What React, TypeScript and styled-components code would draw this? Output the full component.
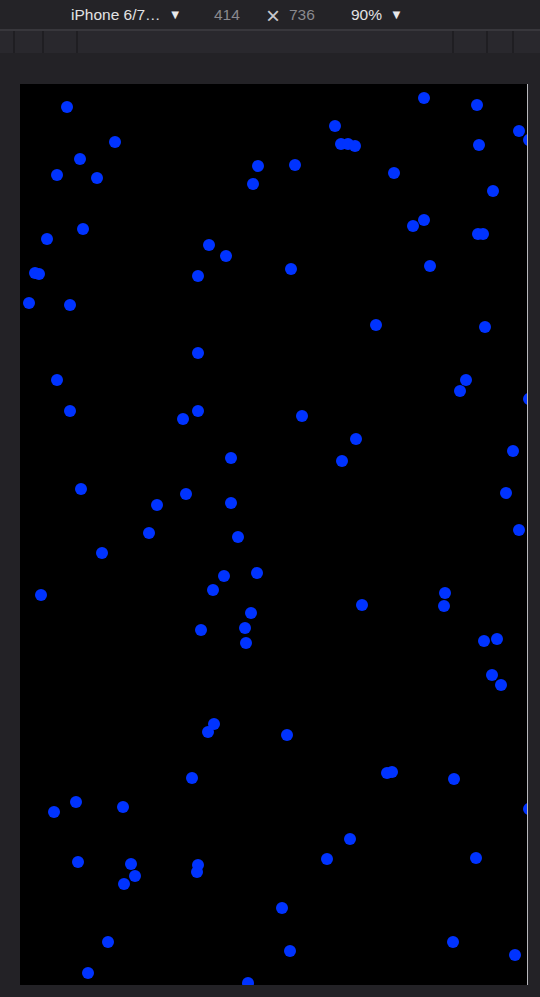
import styled, { createGlobalStyle } from "styled-components";

const GlobalStyle = createGlobalStyle`
  html, body {
    margin: 0;
    padding: 0;
    background: #242327;
    font-family: "Liberation Sans", Arial, sans-serif;
    overflow: hidden;
  }
`;

type Dot = [number, number];

// dot centres in canvas coordinates (page minus canvas origin 20,84)
const DOTS: Dot[] = [
  [67, 107], [115, 142], [80, 159], [57, 175], [97, 178], [258, 166], [253, 184],
  [83, 229], [47, 239], [209, 245], [226, 256], [198, 276], [35, 273], [39, 274],
  [29, 303], [70, 305], [424, 98], [477, 105], [335, 126], [341, 144], [348, 144],
  [355, 146], [519, 131], [529, 140], [479, 145], [295, 165], [394, 173], [493, 191],
  [424, 220], [413, 226], [478, 234], [483, 234], [291, 269], [430, 266],
  [198, 353], [57, 380], [70, 411], [198, 411], [183, 419], [231, 458], [81, 489],
  [186, 494], [157, 505], [231, 503], [376, 325], [485, 327], [466, 380], [460, 391],
  [529, 399], [302, 416], [356, 439], [342, 461], [513, 451], [506, 493], [519, 530],
  [149, 533], [238, 537], [102, 553], [41, 595], [224, 576], [257, 573], [213, 590],
  [251, 613], [201, 630], [245, 628], [246, 643], [214, 724], [208, 732],
  [445, 593], [444, 606], [362, 605], [484, 641], [497, 639], [492, 675], [501, 685],
  [287, 735], [192, 778], [76, 802], [54, 812], [123, 807], [78, 862], [131, 864],
  [135, 876], [124, 884], [198, 865], [197, 872], [108, 942], [88, 973], [248, 983],
  [387, 773], [392, 772], [454, 779], [529, 809], [350, 839], [327, 859], [476, 858],
  [282, 908], [290, 951], [453, 942], [515, 955],
].map(([x, y]) => [x - 20, y - 84] as Dot);

const Page = styled.div`
  width: 540px;
  height: 997px;
  display: flex;
  flex-direction: column;
  background: #242327;
`;

const Toolbar = styled.div`
  height: 29px;
  display: flex;
  align-items: center;
  padding-left: 71px;
  font-size: 15.5px;
  border-bottom: 2px solid #38373c;
`;

const Select = styled.span<{ $width: number }>`
  width: ${(p) => p.$width}px;
  color: #e2e2e4;
  display: flex;
  align-items: center;
  gap: 8px;
`;

const Caret = styled.span`
  font-size: 13px;
  color: #e8e8ea;
`;

const Dim = styled.span<{ $width: number }>`
  width: ${(p) => p.$width}px;
  color: #8a898e;
`;

const Times = styled.span`
  width: 23px;
  margin-left: 7px;
  color: #c9c9cc;
  font-size: 24px;
  line-height: 1;
  padding-top: 3px;
`;

const Ruler = styled.div`
  height: 22px;
  display: flex;
  background: #29282d;
`;

const RulerCell = styled.div<{ $width: number }>`
  width: ${(p) => p.$width}px;
  border-right: 2px solid #1f1e22;
  box-sizing: border-box;
  &:last-child {
    border-right: none;
    flex: 1;
  }
`;

const Stage = styled.div`
  flex: 1;
  padding: 31px 0 0 20px;
  background: #232226;
`;

const Canvas = styled.div`
  position: relative;
  width: 507px;
  height: 901px;
  background: #000;
  border-right: 1px solid #b8b8bc;
  overflow: hidden;
`;

const Ball = styled.div`
  position: absolute;
  width: 12px;
  height: 12px;
  margin: -6px 0 0 -6px;
  border-radius: 50%;
  background: #0033ff;
`;

export default function App() {
  return (
    <Page>
      <GlobalStyle />
      <Toolbar>
        <Select $width={143}>
          iPhone 6/7… <Caret>▼</Caret>
        </Select>
        <Dim $width={45}>414</Dim>
        <Times>×</Times>
        <Dim $width={62}>736</Dim>
        <Select $width={80}>
          90% <Caret>▼</Caret>
        </Select>
      </Toolbar>
      <Ruler>
        {[15, 29, 34, 376, 34, 26, 26].map((w, i) => (
          <RulerCell key={i} $width={w} />
        ))}
      </Ruler>
      <Stage>
        <Canvas>
          {DOTS.map(([x, y], i) => (
            <Ball key={i} style={{ left: x, top: y }} />
          ))}
        </Canvas>
      </Stage>
    </Page>
  );
}
